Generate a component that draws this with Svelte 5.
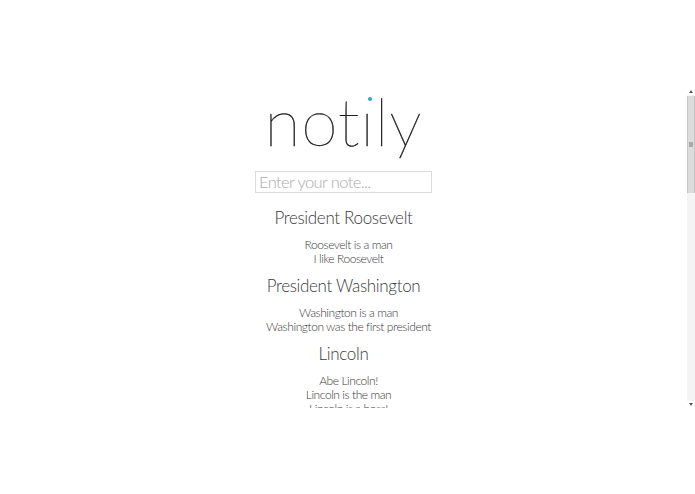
<script>
	const notes = [
		{ title: 'President Roosevelt', lines: ['Roosevelt is a man', 'I like Roosevelt'] },
		{ title: 'President Washington', lines: ['Washington is a man', 'Washington was the first president'] },
		{ title: 'Lincoln', lines: ['Abe Lincoln!', 'Lincoln is the man', 'Lincoln is a boss!'] }
	];
</script>

<div class="page">
	<main class="scroller">
		<div class="content">
			<h1 class="logo">not<span class="i">ı<span class="dot"></span></span>ly</h1>
			<input class="note-input" type="text" placeholder="Enter your note..." />
			{#each notes as note}
				<section class="note">
					<h2>{note.title}</h2>
					<p>
						{#each note.lines as line}
							<span>{line}</span>
						{/each}
					</p>
				</section>
			{/each}
		</div>
		<div class="scrollbar">
			<div class="arrow up"></div>
			<div class="thumb"><div class="grip"></div></div>
			<div class="track"></div>
			<div class="arrow down"></div>
		</div>
	</main>
</div>

<style>
	:global(body) {
		background: #fff;
		font-family: Lato, 'Open Sans', sans-serif;
		font-weight: 300;
		color: #3a3a3a;
	}

	.page {
		height: 494px;
		padding-top: 88px;
		box-sizing: border-box;
		overflow: hidden;
	}

	.scroller {
		height: 320px;
		display: flex;
	}

	/* extends above the scroller so the tall logo line isn't clipped */
	.content {
		flex: 1;
		display: flex;
		flex-direction: column;
		align-items: center;
		min-width: 0;
		margin-top: -10px;
		padding-top: 10px;
		overflow: hidden;
	}

	.content > * {
		flex-shrink: 0;
	}

	.logo {
		margin: 0;
		height: 83px;
		font-size: 66px;
		line-height: 66px;
		font-weight: 100;
		letter-spacing: 0.8px;
		color: #111;
		-webkit-text-stroke: 0.4px #111;
	}

	.i {
		position: relative;
	}

	.dot {
		position: absolute;
		left: 8px;
		top: 16px;
		width: 4px;
		height: 4px;
		border-radius: 50%;
		background: #2aa7c4;
	}

	.note-input {
		width: 177px;
		height: 22px;
		box-sizing: border-box;
		padding: 0 3px;
		border: 1px solid #ddd;
		font: 300 16.5px Lato, sans-serif;
		letter-spacing: -0.6px;
		outline: none;
	}

	.note-input::placeholder {
		color: #aaa;
		opacity: 1;
	}

	.note {
		text-align: center;
		padding-bottom: 9px;
	}

	.note-input + .note {
		margin-top: 14px;
	}

	h2 {
		margin: 0;
		font-size: 17px;
		line-height: 22px;
		font-weight: 300;
		letter-spacing: -0.33px;
	}

	p {
		margin: 9px 0 0 10px;
		font-size: 12px;
		line-height: 14px;
		letter-spacing: -0.44px;
	}

	p span {
		display: block;
	}

	.scrollbar {
		width: 8px;
		display: flex;
		flex-direction: column;
		background: #f4f4f4;
	}

	.arrow {
		height: 7px;
		background: #fff;
		position: relative;
	}

	.arrow::after {
		content: '';
		position: absolute;
		left: 2px;
		top: 2px;
		border-left: 2px solid transparent;
		border-right: 2px solid transparent;
	}

	.up::after {
		border-bottom: 3px solid #555;
	}

	.down::after {
		border-top: 3px solid #555;
	}

	.thumb {
		height: 97px;
		margin-top: 1px;
		box-sizing: border-box;
		background: #dcdcdc;
		border-left: 1px solid #c6c6c6;
		border-right: 1px solid #c6c6c6;
		display: flex;
		align-items: center;
		justify-content: center;
	}

	.grip {
		width: 4px;
		height: 5px;
		background: #aaa;
	}

	.track {
		flex: 1;
	}
</style>
